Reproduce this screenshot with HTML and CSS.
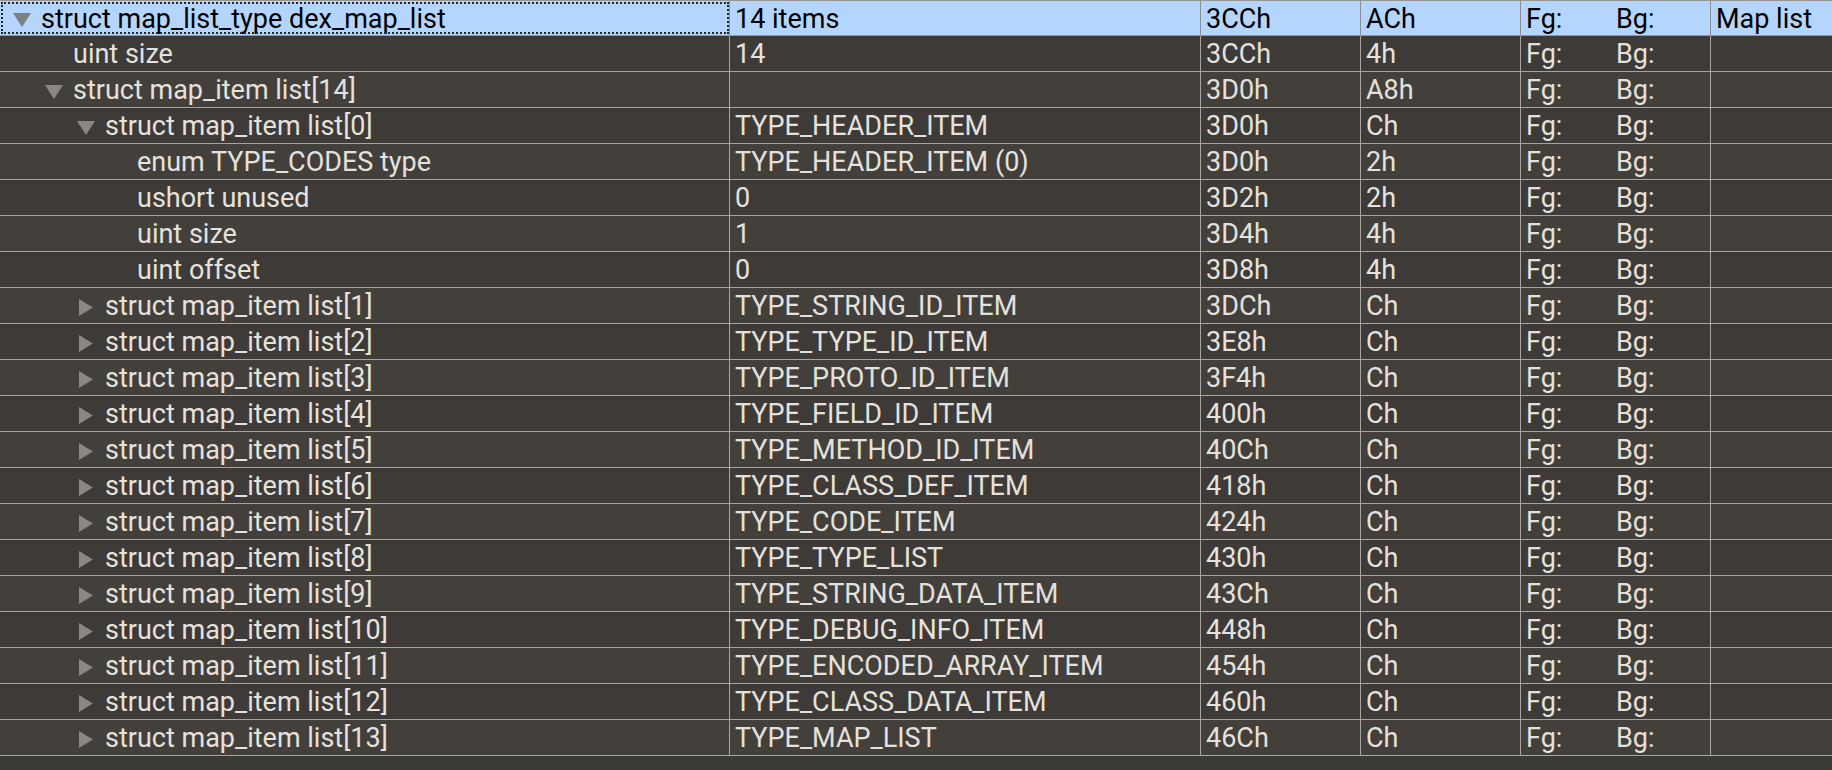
FILE: index.html
```html
<!DOCTYPE html>
<html lang="en">
  <head>
    <meta charset="UTF-8" />
    <title>Template results</title>
    <link rel="stylesheet" href="styles.css">
  </head>
  <body>
    <div class="tree">
      <div class="row selected">
        <div class="cell name focus lvl-0"><span class="toggle"><svg class="tri-down" viewBox="0 0 18 14"><polygon points="0,0 18,0 9,14" /></svg></span>struct map_list_type dex_map_list</div>
        <div class="cell">14 items</div>
        <div class="cell">3CCh</div>
        <div class="cell">ACh</div>
        <div class="cell color"><span>Fg:</span><span>Bg:</span></div>
        <div class="cell">Map list</div>
      </div>
      <div class="row">
        <div class="cell name lvl-1"><span class="toggle"></span>uint size</div>
        <div class="cell">14</div>
        <div class="cell">3CCh</div>
        <div class="cell">4h</div>
        <div class="cell color"><span>Fg:</span><span>Bg:</span></div>
        <div class="cell"></div>
      </div>
      <div class="row">
        <div class="cell name lvl-1"><span class="toggle"><svg class="tri-down" viewBox="0 0 18 14"><polygon points="0,0 18,0 9,14" /></svg></span>struct map_item list[14]</div>
        <div class="cell"></div>
        <div class="cell">3D0h</div>
        <div class="cell">A8h</div>
        <div class="cell color"><span>Fg:</span><span>Bg:</span></div>
        <div class="cell"></div>
      </div>
      <div class="row">
        <div class="cell name lvl-2"><span class="toggle"><svg class="tri-down" viewBox="0 0 18 14"><polygon points="0,0 18,0 9,14" /></svg></span>struct map_item list[0]</div>
        <div class="cell">TYPE_HEADER_ITEM</div>
        <div class="cell">3D0h</div>
        <div class="cell">Ch</div>
        <div class="cell color"><span>Fg:</span><span>Bg:</span></div>
        <div class="cell"></div>
      </div>
      <div class="row">
        <div class="cell name lvl-3"><span class="toggle"></span>enum TYPE_CODES type</div>
        <div class="cell">TYPE_HEADER_ITEM (0)</div>
        <div class="cell">3D0h</div>
        <div class="cell">2h</div>
        <div class="cell color"><span>Fg:</span><span>Bg:</span></div>
        <div class="cell"></div>
      </div>
      <div class="row">
        <div class="cell name lvl-3"><span class="toggle"></span>ushort unused</div>
        <div class="cell">0</div>
        <div class="cell">3D2h</div>
        <div class="cell">2h</div>
        <div class="cell color"><span>Fg:</span><span>Bg:</span></div>
        <div class="cell"></div>
      </div>
      <div class="row">
        <div class="cell name lvl-3"><span class="toggle"></span>uint size</div>
        <div class="cell">1</div>
        <div class="cell">3D4h</div>
        <div class="cell">4h</div>
        <div class="cell color"><span>Fg:</span><span>Bg:</span></div>
        <div class="cell"></div>
      </div>
      <div class="row">
        <div class="cell name lvl-3"><span class="toggle"></span>uint offset</div>
        <div class="cell">0</div>
        <div class="cell">3D8h</div>
        <div class="cell">4h</div>
        <div class="cell color"><span>Fg:</span><span>Bg:</span></div>
        <div class="cell"></div>
      </div>
      <div class="row">
        <div class="cell name lvl-2"><span class="toggle"><svg class="tri-right" viewBox="0 0 14 17"><polygon points="0,0 14,8.5 0,17" /></svg></span>struct map_item list[1]</div>
        <div class="cell">TYPE_STRING_ID_ITEM</div>
        <div class="cell">3DCh</div>
        <div class="cell">Ch</div>
        <div class="cell color"><span>Fg:</span><span>Bg:</span></div>
        <div class="cell"></div>
      </div>
      <div class="row">
        <div class="cell name lvl-2"><span class="toggle"><svg class="tri-right" viewBox="0 0 14 17"><polygon points="0,0 14,8.5 0,17" /></svg></span>struct map_item list[2]</div>
        <div class="cell">TYPE_TYPE_ID_ITEM</div>
        <div class="cell">3E8h</div>
        <div class="cell">Ch</div>
        <div class="cell color"><span>Fg:</span><span>Bg:</span></div>
        <div class="cell"></div>
      </div>
      <div class="row">
        <div class="cell name lvl-2"><span class="toggle"><svg class="tri-right" viewBox="0 0 14 17"><polygon points="0,0 14,8.5 0,17" /></svg></span>struct map_item list[3]</div>
        <div class="cell">TYPE_PROTO_ID_ITEM</div>
        <div class="cell">3F4h</div>
        <div class="cell">Ch</div>
        <div class="cell color"><span>Fg:</span><span>Bg:</span></div>
        <div class="cell"></div>
      </div>
      <div class="row">
        <div class="cell name lvl-2"><span class="toggle"><svg class="tri-right" viewBox="0 0 14 17"><polygon points="0,0 14,8.5 0,17" /></svg></span>struct map_item list[4]</div>
        <div class="cell">TYPE_FIELD_ID_ITEM</div>
        <div class="cell">400h</div>
        <div class="cell">Ch</div>
        <div class="cell color"><span>Fg:</span><span>Bg:</span></div>
        <div class="cell"></div>
      </div>
      <div class="row">
        <div class="cell name lvl-2"><span class="toggle"><svg class="tri-right" viewBox="0 0 14 17"><polygon points="0,0 14,8.5 0,17" /></svg></span>struct map_item list[5]</div>
        <div class="cell">TYPE_METHOD_ID_ITEM</div>
        <div class="cell">40Ch</div>
        <div class="cell">Ch</div>
        <div class="cell color"><span>Fg:</span><span>Bg:</span></div>
        <div class="cell"></div>
      </div>
      <div class="row">
        <div class="cell name lvl-2"><span class="toggle"><svg class="tri-right" viewBox="0 0 14 17"><polygon points="0,0 14,8.5 0,17" /></svg></span>struct map_item list[6]</div>
        <div class="cell">TYPE_CLASS_DEF_ITEM</div>
        <div class="cell">418h</div>
        <div class="cell">Ch</div>
        <div class="cell color"><span>Fg:</span><span>Bg:</span></div>
        <div class="cell"></div>
      </div>
      <div class="row">
        <div class="cell name lvl-2"><span class="toggle"><svg class="tri-right" viewBox="0 0 14 17"><polygon points="0,0 14,8.5 0,17" /></svg></span>struct map_item list[7]</div>
        <div class="cell">TYPE_CODE_ITEM</div>
        <div class="cell">424h</div>
        <div class="cell">Ch</div>
        <div class="cell color"><span>Fg:</span><span>Bg:</span></div>
        <div class="cell"></div>
      </div>
      <div class="row">
        <div class="cell name lvl-2"><span class="toggle"><svg class="tri-right" viewBox="0 0 14 17"><polygon points="0,0 14,8.5 0,17" /></svg></span>struct map_item list[8]</div>
        <div class="cell">TYPE_TYPE_LIST</div>
        <div class="cell">430h</div>
        <div class="cell">Ch</div>
        <div class="cell color"><span>Fg:</span><span>Bg:</span></div>
        <div class="cell"></div>
      </div>
      <div class="row">
        <div class="cell name lvl-2"><span class="toggle"><svg class="tri-right" viewBox="0 0 14 17"><polygon points="0,0 14,8.5 0,17" /></svg></span>struct map_item list[9]</div>
        <div class="cell">TYPE_STRING_DATA_ITEM</div>
        <div class="cell">43Ch</div>
        <div class="cell">Ch</div>
        <div class="cell color"><span>Fg:</span><span>Bg:</span></div>
        <div class="cell"></div>
      </div>
      <div class="row">
        <div class="cell name lvl-2"><span class="toggle"><svg class="tri-right" viewBox="0 0 14 17"><polygon points="0,0 14,8.5 0,17" /></svg></span>struct map_item list[10]</div>
        <div class="cell">TYPE_DEBUG_INFO_ITEM</div>
        <div class="cell">448h</div>
        <div class="cell">Ch</div>
        <div class="cell color"><span>Fg:</span><span>Bg:</span></div>
        <div class="cell"></div>
      </div>
      <div class="row">
        <div class="cell name lvl-2"><span class="toggle"><svg class="tri-right" viewBox="0 0 14 17"><polygon points="0,0 14,8.5 0,17" /></svg></span>struct map_item list[11]</div>
        <div class="cell">TYPE_ENCODED_ARRAY_ITEM</div>
        <div class="cell">454h</div>
        <div class="cell">Ch</div>
        <div class="cell color"><span>Fg:</span><span>Bg:</span></div>
        <div class="cell"></div>
      </div>
      <div class="row">
        <div class="cell name lvl-2"><span class="toggle"><svg class="tri-right" viewBox="0 0 14 17"><polygon points="0,0 14,8.5 0,17" /></svg></span>struct map_item list[12]</div>
        <div class="cell">TYPE_CLASS_DATA_ITEM</div>
        <div class="cell">460h</div>
        <div class="cell">Ch</div>
        <div class="cell color"><span>Fg:</span><span>Bg:</span></div>
        <div class="cell"></div>
      </div>
      <div class="row">
        <div class="cell name lvl-2"><span class="toggle"><svg class="tri-right" viewBox="0 0 14 17"><polygon points="0,0 14,8.5 0,17" /></svg></span>struct map_item list[13]</div>
        <div class="cell">TYPE_MAP_LIST</div>
        <div class="cell">46Ch</div>
        <div class="cell">Ch</div>
        <div class="cell color"><span>Fg:</span><span>Bg:</span></div>
        <div class="cell"></div>
      </div>
    </div>
  </body>
</html>
```

FILE: styles.css
```css
body {
  margin: 0px;
  height: 100vh;
  background-color: rgb(60, 58, 54);
  font-family: Roboto, 'Liberation Sans', sans-serif;
  font-size: 27px;
  color: rgb(228, 226, 222);
  overflow: hidden;
}

.tree {
  border-top: 1px solid rgb(150, 150, 150);
}

.row {
  display: grid;
  grid-template-columns: 730px 471px 160px 160px 190px 1fr;
  height: 36px;
  box-sizing: border-box;
  border-bottom: 1px solid rgb(168, 165, 160);
}

.row:nth-child(odd) {
  background-color: rgb(67, 64, 60);
}

.row:nth-child(even) {
  background-color: rgb(61, 58, 55);
}

.row.selected {
  height: 35px;
  background-color: rgb(180, 214, 254);
  color: rgb(0, 0, 0);
  border-bottom-color: rgb(150, 150, 150);
}

.cell {
  box-sizing: border-box;
  border-right: 1px solid rgb(168, 165, 160);
  padding: 1px 0px 0px 5px;
  line-height: 34px;
  white-space: nowrap;
  overflow: hidden;
  display: flex;
  align-items: center;
}

.cell:last-child {
  border-right: none;
}

.selected .cell {
  border-right-color: rgb(140, 140, 145);
}

.cell.focus {
  outline: 2px dotted rgb(40, 40, 40);
  outline-offset: -3px;
}

.name {
  padding-left: 13px;
}

.lvl-1 {
  padding-left: 45px;
}

.lvl-2 {
  padding-left: 77px;
}

.lvl-3 {
  padding-left: 109px;
}

.toggle {
  width: 28px;
  flex-shrink: 0;
  display: flex;
  align-items: center;
  height: 34px;
}

.toggle svg {
  flex-shrink: 0;
  fill: rgb(138, 136, 133);
  margin-top: 3px;
}

.selected .toggle svg {
  fill: rgb(125, 128, 134);
}

.tri-down {
  width: 18px;
  height: 14px;
}

.tri-right {
  width: 14px;
  height: 17px;
  margin-left: 2px;
}

.color > span:first-child {
  width: 90px;
}
```
